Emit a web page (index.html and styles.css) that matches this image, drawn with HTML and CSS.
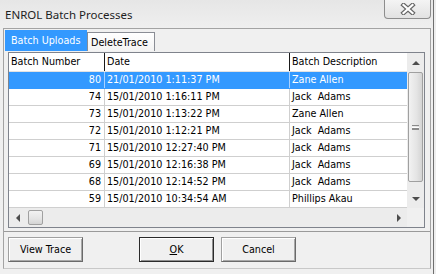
FILE: index.html
```html
<!DOCTYPE html>
<html lang="en">
<head>
    <meta charset="UTF-8">
    <title>ENROL Batch Processes</title>
    <link rel="stylesheet" href="styles.css">
</head>
<body>
    <div class="window">
        <div class="titlebar">
            <span class="title">ENROL Batch Processes</span>
            <div class="close">
                <svg width="16" height="12" viewBox="0 0 16 12">
                    <path d="M3.5 2 L12.5 10 M12.5 2 L3.5 10" stroke="#666666" stroke-width="4.4" stroke-linecap="square"/>
                    <path d="M3.5 2 L12.5 10 M12.5 2 L3.5 10" stroke="#ffffff" stroke-width="2.2" stroke-linecap="square"/>
                </svg>
            </div>
        </div>
        <div class="client">
            <div class="tabs">
                <div class="tab active">Batch Uploads</div>
                <div class="tab">DeleteTrace</div>
            </div>
            <div class="page">
                <div class="grid">
                    <div class="grid-main">
                        <div class="table">
                            <div class="row head">
                                <div class="cell">Batch Number</div>
                                <div class="cell">Date</div>
                                <div class="cell">Batch Description</div>
                            </div>
                            <div class="row selected">
                                <div class="cell num">80</div>
                                <div class="cell">21/01/2010 1:11:37 PM</div>
                                <div class="cell">Zane Allen</div>
                            </div>
                            <div class="row">
                                <div class="cell num">74</div>
                                <div class="cell">15/01/2010 1:16:11 PM</div>
                                <div class="cell">Jack  Adams</div>
                            </div>
                            <div class="row">
                                <div class="cell num">73</div>
                                <div class="cell">15/01/2010 1:13:22 PM</div>
                                <div class="cell">Zane Allen</div>
                            </div>
                            <div class="row">
                                <div class="cell num">72</div>
                                <div class="cell">15/01/2010 1:12:21 PM</div>
                                <div class="cell">Jack  Adams</div>
                            </div>
                            <div class="row">
                                <div class="cell num">71</div>
                                <div class="cell">15/01/2010 12:27:40 PM</div>
                                <div class="cell">Jack  Adams</div>
                            </div>
                            <div class="row">
                                <div class="cell num">69</div>
                                <div class="cell">15/01/2010 12:16:38 PM</div>
                                <div class="cell">Jack  Adams</div>
                            </div>
                            <div class="row">
                                <div class="cell num">68</div>
                                <div class="cell">15/01/2010 12:14:52 PM</div>
                                <div class="cell">Jack  Adams</div>
                            </div>
                            <div class="row">
                                <div class="cell num">59</div>
                                <div class="cell">15/01/2010 10:34:54 AM</div>
                                <div class="cell">Phillips Akau</div>
                            </div>
                        </div>
                        <div class="vscroll">
                            <div class="arrow-btn"><span class="tri up"></span></div>
                            <div class="vtrack">
                                <div class="vthumb"><span class="grip"></span></div>
                            </div>
                            <div class="arrow-btn"><span class="tri down"></span></div>
                        </div>
                    </div>
                    <div class="grid-foot">
                        <div class="hscroll">
                            <div class="harrow"><span class="tri left"></span></div>
                            <div class="hthumb"></div>
                            <div class="htrack"></div>
                            <div class="harrow"><span class="tri right"></span></div>
                        </div>
                        <div class="corner"></div>
                    </div>
                </div>
            </div>
            <div class="actions">
                <div class="btn">View Trace</div>
                <div class="btn default"><u>O</u>K</div>
                <div class="btn">Cancel</div>
            </div>
        </div>
    </div>
</body>
</html>
```

FILE: styles.css
```css
* {
    box-sizing: border-box;
}
body {
    margin: 0;
    background: #eeeeee;
    font-family: "DejaVu Sans Condensed", "Liberation Sans", sans-serif;
    font-size: 10.7px;
    color: #000;
}
.window {
    width: 434px;
    height: 274px;
    border-right: 1px solid #6f6f6f;
    background: linear-gradient(#e6e6e6, #efefef 28px, #f0f0f0);
}
.titlebar {
    height: 28px;
    display: flex;
    align-items: flex-start;
}
.title {
    padding: 7px 0 0 5px;
    font-family: "Noto Sans", "Open Sans", sans-serif;
    font-size: 11.5px;
    line-height: 16px;
    color: #1e1e1e;
}
.close {
    margin-left: auto;
    margin-right: 2px;
    width: 47px;
    height: 19px;
    border: 1px solid #8d8d8d;
    border-top: none;
    border-radius: 0 0 4px 4px;
    background: linear-gradient(#f4f4f4, #e2e2e2);
    display: flex;
    justify-content: center;
    align-items: center;
}
.client {
    margin-left: 3px;
    width: 428px;
    height: 241px;
    border: 1px solid #a3a3a3;
    border-bottom-color: #c8c8c8;
    background: #f0f0f0;
}
.tabs {
    height: 22px;
    display: flex;
    align-items: flex-end;
    padding-left: 1px;
}
.tab {
    width: 68px;
    height: 19px;
    padding: 2px 0 0 3px;
    border: 1px solid #8a8d95;
    border-bottom: none;
    background: linear-gradient(#ffffff, #f3f3f3);
    line-height: 15px;
}
.tab.active {
    width: 82px;
    height: 21px;
    padding: 2px 0 0 6px;
    border: none;
    background: #3399ff;
    color: #fff;
    line-height: 17px;
}
.page {
    height: 181px;
    padding: 1px 0 0 4px;
    border-bottom: 1px solid #9a9a9a;
}
.grid {
    width: 417px;
    height: 176px;
    border: 1px solid #7f838c;
    background: #fff;
    display: flex;
    flex-direction: column;
}
.grid-main {
    display: flex;
    height: 155px;
}
.table {
    width: 398px;
}
.row {
    display: grid;
    grid-template-columns: 96px 185px 117px;
    height: 17px;
    border-bottom: 1px solid #cfcfcf;
    line-height: 16px;
}
.row.head {
    height: 19px;
    line-height: 18px;
    border-bottom-color: #e2e2e2;
}
.cell {
    padding-left: 2px;
    white-space: pre;
    overflow: hidden;
    border-right: 1px solid #cfcfcf;
}
.cell:last-child {
    border-right: none;
}
.head .cell {
    border-right-color: #1a1a1a;
}
.cell.num {
    text-align: right;
    padding: 0 3px 0 0;
}
.row.selected {
    background: #3399ff;
    color: #fff;
    border-bottom-color: #3399ff;
}
.selected .cell {
    border-right-color: #a9d1ff;
}
.vscroll {
    width: 17px;
    background: #ececec;
    display: flex;
    flex-direction: column;
}
.arrow-btn {
    height: 19px;
    display: flex;
    justify-content: center;
    align-items: center;
}
.vtrack {
    flex: 1;
    padding: 0 1px;
}
.vthumb {
    height: 110px;
    border: 1px solid #a0a0a0;
    border-radius: 2px;
    background: linear-gradient(90deg, #f2f2f2, #e4e4e4 60%, #d4d4d4);
    display: flex;
    justify-content: center;
    align-items: center;
}
.grip {
    width: 7px;
    height: 5px;
    border-top: 1px solid #8a8a8a;
    border-bottom: 1px solid #8a8a8a;
    background: linear-gradient(#fff 1px, #8a8a8a 1px, #8a8a8a 2px, transparent 2px) 0 1px / 100% 3px no-repeat;
}
.tri {
    width: 0;
    height: 0;
}
.tri.up {
    border-left: 4px solid transparent;
    border-right: 4px solid transparent;
    border-bottom: 4px solid #4d4d4d;
}
.tri.down {
    border-left: 4px solid transparent;
    border-right: 4px solid transparent;
    border-top: 4px solid #4d4d4d;
}
.tri.left {
    border-top: 4px solid transparent;
    border-bottom: 4px solid transparent;
    border-right: 4px solid #4d4d4d;
}
.tri.right {
    border-top: 4px solid transparent;
    border-bottom: 4px solid transparent;
    border-left: 4px solid #4d4d4d;
}
.grid-foot {
    display: flex;
    flex: 1;
}
.hscroll {
    width: 398px;
    display: flex;
    align-items: center;
    background: #ececec;
}
.harrow {
    width: 17px;
    height: 100%;
    display: flex;
    justify-content: center;
    align-items: center;
}
.hthumb {
    width: 15px;
    height: 15px;
    margin-left: 2px;
    border: 1px solid #a0a0a0;
    border-radius: 2px;
    background: linear-gradient(#f2f2f2, #e4e4e4 60%, #d4d4d4);
}
.htrack {
    flex: 1;
}
.corner {
    flex: 1;
    background: #f0f0f0;
}
.actions {
    display: flex;
    padding: 5px 0 0 4px;
}
.btn {
    width: 75px;
    height: 25px;
    border: 1px solid #a0a0a0;
    border-right-color: #6a6a6a;
    border-bottom-color: #6a6a6a;
    box-shadow: inset 1px 1px #ffffff, inset -1px -1px #a8a8a8;
    background: #f0f0f0;
    text-align: center;
    line-height: 23px;
}
.btn.default {
    margin-left: 56px;
    border: 1px solid #2a2a2a;
    box-shadow: inset 1px 1px #ffffff, inset -1px -1px #8e8e8e;
}
.btn + .btn + .btn {
    margin-left: 7px;
}
```
